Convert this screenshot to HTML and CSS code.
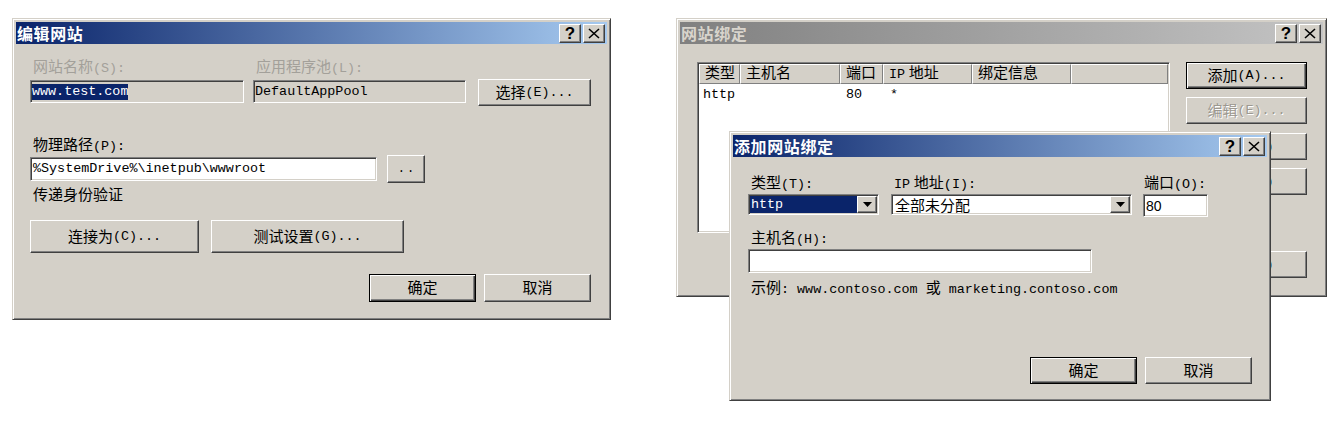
FILE: index.html
```html
<!DOCTYPE html>
<html lang="zh-CN">
<head>
<meta charset="utf-8">
<title>IIS 网站设置</title>
<link rel="stylesheet" href="styles.css">
</head>
<body>
<div class="page">

  <section class="dlg dlg-edit">
    <div class="titlebar active">
      <span class="title">编辑网站</span>
      <span class="tbtns">
        <span class="tbtn">?</span>
        <span class="tbtn"><svg width="12" height="11" viewBox="0 0 12 11"><path d="M1 1L11 10M11 1L1 10" stroke="#000" stroke-width="1.6"/></svg></span>
      </span>
    </div>
    <div class="body edit-body">
      <div class="row r1">
        <div class="field f-name">
          <span class="lbl disabled">网站名称<span class="m">(S):</span></span>
          <div class="input ro"><span class="hl">www.test.com</span></div>
        </div>
        <div class="field f-pool">
          <span class="lbl disabled">应用程序池<span class="m">(L):</span></span>
          <div class="input ro">DefaultAppPool</div>
        </div>
        <button class="btn b-select">选择<span class="m">(E)...</span></button>
      </div>
      <span class="lbl l-path">物理路径<span class="m">(P):</span></span>
      <div class="row r2">
        <div class="input path">%SystemDrive%\inetpub\wwwroot</div>
        <button class="btn b-browse">..</button>
      </div>
      <span class="lbl l-auth">传递身份验证</span>
      <div class="row r3">
        <button class="btn b-conn">连接为<span class="m">(C)...</span></button>
        <button class="btn b-test">测试设置<span class="m">(G)...</span></button>
      </div>
      <div class="row r4">
        <button class="btn default b-ok">确定</button>
        <button class="btn b-cancel">取消</button>
      </div>
    </div>
  </section>

  <section class="dlg dlg-bind">
    <div class="titlebar inactive">
      <span class="title">网站绑定</span>
      <span class="tbtns">
        <span class="tbtn">?</span>
        <span class="tbtn"><svg width="12" height="11" viewBox="0 0 12 11"><path d="M1 1L11 10M11 1L1 10" stroke="#000" stroke-width="1.6"/></svg></span>
      </span>
    </div>
    <div class="body bind-body">
      <div class="listview">
        <div class="lv-head">
          <span class="th c1">类型</span>
          <span class="th c2">主机名</span>
          <span class="th c3">端口</span>
          <span class="th c4"><span class="m">IP</span> 地址</span>
          <span class="th c5">绑定信息</span>
          <span class="th c6"></span>
        </div>
        <div class="lv-row">
          <span class="td c1">http</span>
          <span class="td c2"></span>
          <span class="td c3">80</span>
          <span class="td c4">*</span>
          <span class="td c5"></span>
        </div>
      </div>
      <div class="bind-btns">
        <button class="btn default">添加<span class="m">(A)...</span></button>
        <button class="btn disabled-btn b2">编辑<span class="m">(E)...</span></button>
        <button class="btn b3">删除<span class="m">(R)</span></button>
        <button class="btn b4">浏览<span class="m">(B)</span></button>
        <button class="btn b5">关闭<span class="m">(C)</span></button>
      </div>
    </div>

    <section class="dlg dlg-add">
      <div class="titlebar active">
        <span class="title">添加网站绑定</span>
        <span class="tbtns">
          <span class="tbtn">?</span>
          <span class="tbtn"><svg width="12" height="11" viewBox="0 0 12 11"><path d="M1 1L11 10M11 1L1 10" stroke="#000" stroke-width="1.6"/></svg></span>
        </span>
      </div>
      <div class="body add-body">
        <div class="row a1">
          <div class="field f-type">
            <span class="lbl">类型<span class="m">(T):</span></span>
            <div class="select">
              <span class="sel-val selected">http</span>
              <span class="dd-btn"><svg width="9" height="5" viewBox="0 0 9 5"><path d="M0 0H9L4.5 5Z" fill="#000"/></svg></span>
            </div>
          </div>
          <div class="field f-ip">
            <span class="lbl"><span class="m">IP</span> 地址<span class="m">(I):</span></span>
            <div class="select">
              <span class="sel-val cjk">全部未分配</span>
              <span class="dd-btn"><svg width="9" height="5" viewBox="0 0 9 5"><path d="M0 0H9L4.5 5Z" fill="#000"/></svg></span>
            </div>
          </div>
          <div class="field f-port">
            <span class="lbl lp">端口<span class="m">(O):</span></span>
            <div class="input port">80</div>
          </div>
        </div>
        <span class="lbl l-host">主机名<span class="m">(H):</span></span>
        <div class="input host"></div>
        <div class="example"><span class="cj">示例</span>: www.contoso.com <span class="cj">或</span> marketing.contoso.com</div>
        <div class="row a4">
          <button class="btn default b-ok">确定</button>
          <button class="btn b-cancel">取消</button>
        </div>
      </div>
    </section>
  </section>

</div>
</body>
</html>
```

FILE: styles.css
```css
* { box-sizing: border-box; margin: 0; padding: 0; }
html, body { background: #fff; }
body {
  min-height: 427px;
  font: 15px/18px "Liberation Serif", "Noto Sans CJK SC", serif;
  color: #000;
}
.page {
  display: flex;
  align-items: flex-start;
  gap: 65px;
  min-height: 427px;
  padding: 18px 0 0 12px;
}
.m { font-family: "Liberation Mono", monospace; font-size: 13.4px; }

/* windows */
.dlg {
  background: #d4d0c8;
  border: 1px solid;
  border-color: #d4d0c8 #404040 #404040 #d4d0c8;
  box-shadow: inset 1px 1px #fff, inset -1px -1px #808080;
  padding: 3px;
  display: flex;
  flex-direction: column;
}
.dlg-edit { width: 599px; height: 302px; }
.dlg-bind { width: 651px; height: 279px; position: relative; }
.dlg-add {
  position: absolute;
  left: 52px;
  top: 112px;
  width: 542px;
  height: 270px;
}

.titlebar {
  height: 22px;
  flex: none;
  display: flex;
  align-items: center;
  justify-content: space-between;
  padding: 0 2px 0 1px;
}
.titlebar.active { background: linear-gradient(to right, #0a246a, #a6caf0); }
.titlebar.inactive { background: linear-gradient(to right, #808080, #c4c4c4); }
.title {
  font: bold 16px/18px "Noto Sans CJK SC", sans-serif;
  letter-spacing: 0.6px;
  color: #fff;
}
.inactive .title { color: #d8d4cc; }
.tbtns { display: flex; gap: 2px; }
.tbtn {
  width: 22px;
  height: 19px;
  background: #d4d0c8;
  border: 1px solid;
  border-color: #fff #404040 #404040 #fff;
  box-shadow: inset -1px -1px #808080;
  display: flex;
  align-items: center;
  justify-content: center;
  font: bold 17px/1 "Liberation Sans", sans-serif;
  color: #000;
}

/* generic controls */
.row { display: flex; }
.field { display: flex; flex-direction: column; }
.lbl { display: block; height: 18px; line-height: 18px; margin-left: 3px; white-space: nowrap; }
.lbl.disabled { color: #a3a09a; }
.cjk { font-family: "Noto Sans CJK SC", sans-serif; }

.btn {
  font: 15px/18px "Liberation Serif", "Noto Sans CJK SC", serif;
  color: #000;
  background: #d4d0c8;
  border: 1px solid;
  border-color: #fff #404040 #404040 #fff;
  box-shadow: inset -1px -1px #808080;
  display: flex;
  align-items: center;
  justify-content: center;
  white-space: nowrap;
}
.btn.default {
  border-color: #000;
  box-shadow: inset 1px 1px #fff, inset -1px -1px #404040, inset -2px -2px #808080;
}
.btn.disabled-btn { color: #9c9890; text-shadow: 1px 1px #fff; }

.input {
  background: #fff;
  border: 1px solid;
  border-color: #808080 #fff #fff #808080;
  box-shadow: inset 1px 1px #404040, inset -1px -1px #d4d0c8;
  padding-left: 2px;
  display: flex;
  align-items: center;
  font: 13.4px/16px "Liberation Mono", monospace;
  white-space: nowrap;
  overflow: hidden;
}
.input.ro { background: #d4d0c8; height: 23px; padding-left: 1px; }
.hl { background: #0a246a; color: #fff; }

/* edit website dialog */
.edit-body { padding: 14px 16px 0 14px; }
.f-name { width: 214px; }
.f-pool { width: 213px; margin-left: 9px; }
.r1 .lbl { margin-bottom: 4px; }
.b-select { width: 113px; height: 27px; margin: 21px 0 0 12px; }
.l-path { margin: 30px 0 1px 3px; }
.r2 { align-items: center; gap: 10px; height: 28px; }
.input.path { width: 347px; height: 24px; }
.b-browse {
  width: 38px;
  height: 28px;
  font: 12px/1 "Liberation Mono", monospace;
  letter-spacing: 2px;
  padding-left: 2px;
}
.l-auth { margin: 3px 0 0 3px; }
.r3 { margin-top: 16px; gap: 12px; }
.b-conn { width: 169px; height: 33px; }
.b-test { width: 193px; height: 33px; }
.r4 { margin-top: 21px; gap: 8px; justify-content: flex-end; }
.b-ok, .b-cancel { width: 107px; height: 28px; }

/* bindings dialog */
.bind-body { display: flex; gap: 16px; padding: 18px 0 0 17px; }
.listview {
  width: 473px;
  height: 171px;
  background: #fff;
  border: 1px solid;
  border-color: #808080 #fff #fff #808080;
  box-shadow: inset 1px 1px #404040, inset -1px -1px #d4d0c8;
  padding: 1px;
  display: flex;
  flex-direction: column;
}
.lv-head { display: flex; height: 20px; }
.th {
  background: #d4d0c8;
  border: 1px solid;
  border-color: #fff #808080 #808080 #fff;
  padding-left: 5px;
  line-height: 17px;
  white-space: nowrap;
}
.c1 { width: 41px; }
.c2 { width: 100px; }
.c3 { width: 43px; }
.c4 { width: 89px; }
.c5 { width: 99px; }
.c6 { flex: 1; }
.lv-row {
  display: flex;
  margin-top: 2px;
  font: 13.4px/18px "Liberation Mono", monospace;
}
.td { padding-left: 4px; }
.td.c3 { padding-left: 6px; }
.td.c4 { padding-left: 7px; }

.bind-btns { display: flex; flex-direction: column; width: 121px; }
.bind-btns .btn { height: 27px; }
.bind-btns .b2 { margin-top: 8px; }
.bind-btns .b3 { margin-top: 9px; }
.bind-btns .b4 { margin-top: 8px; }
.bind-btns .b5 { margin-top: 56px; }

/* add binding dialog */
.add-body { padding: 17px 15px 0 15px; display: flex; flex-direction: column; }
.a1 .lbl { margin-bottom: 2px; }
.f-type { width: 131px; }
.f-ip { width: 241px; margin-left: 12px; }
.f-port { width: 65px; margin-left: 11px; }
.f-port .lp { margin-left: 1px; }
.select {
  height: 21px;
  display: flex;
  background: #fff;
  border: 1px solid;
  border-color: #808080 #fff #fff #808080;
  box-shadow: inset 1px 1px #404040, inset -1px -1px #d4d0c8;
  padding: 1px;
}
.sel-val {
  flex: 1;
  padding-left: 1px;
  font: 13.4px/17px "Liberation Mono", monospace;
}
.sel-val.cjk { font: 15px/17px "Noto Sans CJK SC", sans-serif; padding-left: 2px; }
.sel-val.selected { background: #0a246a; color: #fff; }
.dd-btn {
  width: 20px;
  height: 17px;
  background: #d4d0c8;
  border: 1px solid;
  border-color: #fff #404040 #404040 #fff;
  box-shadow: inset -1px -1px #808080;
  display: flex;
  align-items: center;
  justify-content: center;
}
.input.port {
  height: 23px;
  font: 14px/16px "Liberation Sans", sans-serif;
  padding-left: 2px;
}
.l-host { margin: 12px 0 2px 3px; }
.input.host { width: 344px; height: 24px; }
.example {
  margin: 5px 0 0 3px;
  height: 18px;
  font: 13.4px/18px "Liberation Mono", "Noto Sans CJK SC", monospace;
  white-space: nowrap;
}
.example .cj { font: 15px/18px "Noto Sans CJK SC", sans-serif; }
.a4 { margin-top: 61px; gap: 8px; justify-content: flex-end; }
.a4 .btn { width: 107px; height: 27px; }
```
